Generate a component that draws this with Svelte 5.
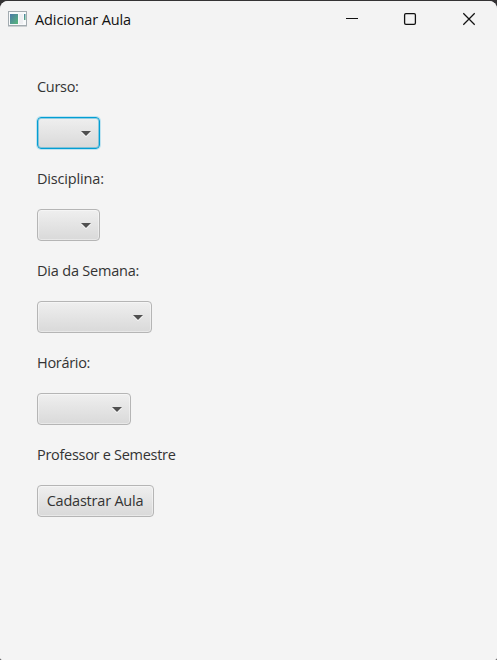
<script>
  const fields = [
    { id: 'curso', label: 'Curso:', width: 63, spacing: -0.3, focused: true },
    { id: 'disciplina', label: 'Disciplina:', width: 63, spacing: -0.17 },
    { id: 'dia', label: 'Dia da Semana:', width: 115, spacing: -0.2 },
    { id: 'horario', label: 'Horário:', width: 94, spacing: -0.3 }
  ];
</script>

<div class="desktop">
  <div class="window">
    <header>
      <svg class="app-icon" width="19" height="16" viewBox="0 0 19 16">
        <defs>
          <linearGradient id="pane" x1="0" y1="0" x2="1" y2="1">
            <stop offset="0" stop-color="#4b79a8" />
            <stop offset="1" stop-color="#57b779" />
          </linearGradient>
        </defs>
        <rect x="0.5" y="0.5" width="18" height="14" fill="#f8fafb" stroke="#a3abb0" />
        <path d="M0 15h19" stroke="#a3abb0" />
        <rect x="2" y="3" width="8" height="10" fill="url(#pane)" />
        <rect x="11" y="3" width="4" height="10" fill="#eeeff2" />
        <rect x="16" y="3" width="1.5" height="6" fill="url(#pane)" />
      </svg>
      <span class="title">Adicionar Aula</span>
      <div class="controls">
        <svg width="58" height="38" viewBox="0 0 58 38"><path d="M15 17.5h12" stroke="#111" fill="none" /></svg>
        <svg width="58" height="38" viewBox="0 0 58 38"><rect x="15.6" y="12.6" width="10.8" height="10.8" rx="1.3" stroke="#111" stroke-width="1.3" fill="none" /></svg>
        <svg width="50" height="38" viewBox="0 0 50 38"><path d="M16.3 12.3l11.4 11.4M27.7 12.3L16.3 23.7" stroke="#111" stroke-width="1.25" fill="none" /></svg>
      </div>
    </header>
    <main>
      {#each fields as f (f.id)}
        <span class="label" style="letter-spacing: {f.spacing}px">{f.label}</span>
        <button class="control combo" class:focused={f.focused} aria-label={f.label} style="width: {f.width}px">
          <svg width="10" height="7" viewBox="0 0 10 7"><path d="M0 2h10L5 7z" fill="#fff" /><path d="M0 1h10L5 6z" fill="#505050" /></svg>
        </button>
      {/each}
      <span class="label info">Professor e Semestre</span>
      <button class="control submit"><span>Cadastrar Aula</span></button>
    </main>
  </div>
</div>

<style>
  :global(body) { background: #303030; }
  .desktop {
    height: 660px;
    box-sizing: border-box;
    padding-top: 1px;
    background: #343234;
    font-family: "Open Sans", "Noto Sans", sans-serif;
    font-size: 14.5px;
    overflow: hidden;
  }
  .window {
    height: 659px;
    background: #f4f4f4;
    border-radius: 8px 8px 2px 2px;
    overflow: hidden;
  }
  header {
    display: flex;
    align-items: flex-start;
    height: 39px;
    background: #f3f3f3;
  }
  .app-icon { margin: 10px 0 0 8px; }
  .title {
    margin: 9px 0 0 8px;
    line-height: 20px;
    color: #111;
    white-space: nowrap;
    letter-spacing: -0.1px;
  }
  .controls { display: flex; margin-left: auto; }
  .controls svg { display: block; }
  main {
    display: flex;
    flex-direction: column;
    align-items: flex-start;
    gap: 20px;
    padding: 37px 37px 0;
  }
  .label { height: 20px; line-height: 20px; color: #333; white-space: nowrap; }
  .info { letter-spacing: -0.29px; }
  .control {
    display: flex;
    align-items: center;
    box-sizing: border-box;
    height: 32px;
    margin: 0;
    border: 1px solid #b5b5b5;
    border-radius: 4px;
    background: linear-gradient(#efefef, #d9d9d9);
    box-shadow: inset 0 0 0 1px rgba(255, 255, 255, 0.4);
    font: inherit;
    color: #333;
    outline: none;
  }
  .combo { justify-content: flex-end; padding: 1px 8px 0 0; }
  .focused {
    border-color: #039ed3;
    box-shadow: 0 0 0 1px #bfe3f0, inset 0 0 0 1px rgba(3, 158, 211, 0.4);
  }
  .submit {
    width: 117px;
    padding: 0 1px 0 0;
    justify-content: center;
    line-height: 20px;
    white-space: nowrap;
    letter-spacing: -0.21px;
  }
</style>
